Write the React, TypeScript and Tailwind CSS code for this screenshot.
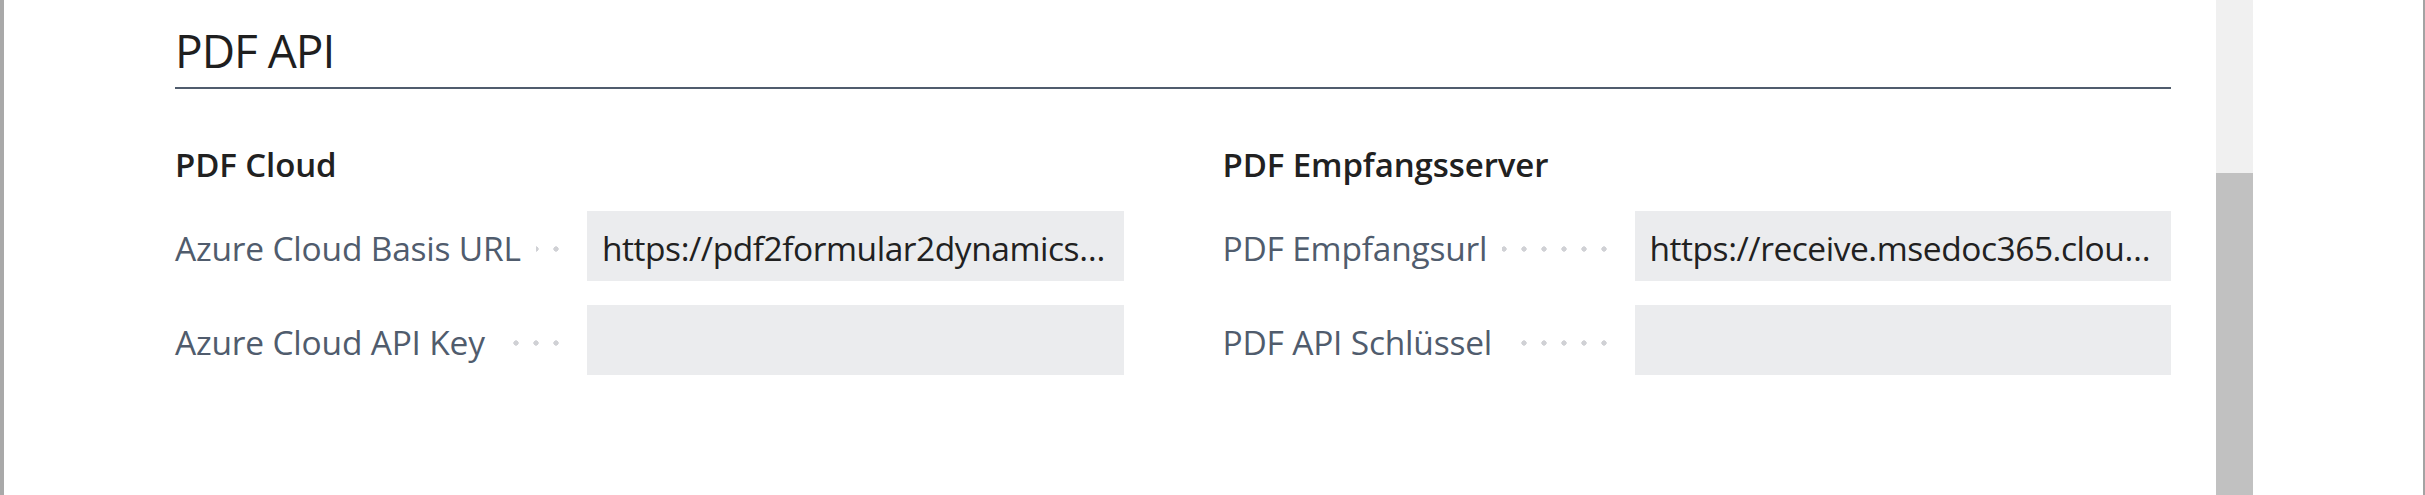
import React from "react";

const dots =
  "bg-[radial-gradient(circle,#d0d1d5_2.4px,transparent_2.9px)] bg-[length:20px_6px] bg-repeat-x bg-[position:right_top_35px]";

function Field({ label, value }: { label: string; value?: string }) {
  return (
    <div className="grid h-[70px] grid-cols-[391px_1fr] gap-x-[21px]">
      <div className={`flex h-[70px] items-center ${dots}`}>
        <span className="mt-[4px] bg-white pr-[15px] text-[33.5px] leading-[46px] tracking-[-0.2px] text-[#505c6d]">
          {label}
        </span>
      </div>
      <div className="flex h-[70px] min-w-0 items-center bg-[#ebecee] pl-[15px] pr-[15px]">
        <span className="mt-[4px] block truncate text-[33.5px] leading-[46px] tracking-[-0.45px] text-[#212121]">
          {value ?? ""}
        </span>
      </div>
    </div>
  );
}

function Group({
  title,
  rows,
}: {
  title: string;
  rows: { label: string; value?: string }[];
}) {
  return (
    <div className="min-w-0">
      <h3 className="h-[40px] text-[33px] font-semibold leading-[40px] tracking-[-0.1px] text-[#212121]">
        {title}
      </h3>
      <div className="mt-[26px] flex flex-col gap-[24px]">
        {rows.map((r) => (
          <Field key={r.label} label={r.label} value={r.value} />
        ))}
      </div>
    </div>
  );
}

export default function App() {
  return (
    <div
      className="flex h-[495px] w-full overflow-hidden border-l-4 border-r-2 border-l-[#a9a9a9] border-r-[#a3a3a3] bg-white"
      style={{ fontFamily: '"Open Sans", "Noto Sans", sans-serif' }}
    >
      <main className="min-w-0 flex-1 pl-[171px] pr-[45px]">
        <h2 className="mt-[20px] h-[60px] text-[46px] font-normal leading-[60px] tracking-[-1px] text-[#1f1f1f]">
          PDF API
        </h2>
        <div className="mt-[7px] h-[2px] bg-[#505c6d]" />
        <div className="mt-[56px] grid grid-cols-2 gap-x-[99px]">
          <Group
            title="PDF Cloud"
            rows={[
              {
                label: "Azure Cloud Basis URL",
                value: "https://pdf2formular2dynamics.azurewebsites.net/api/",
              },
              { label: "Azure Cloud API Key" },
            ]}
          />
          <Group
            title="PDF Empfangsserver"
            rows={[
              {
                label: "PDF Empfangsurl",
                value: "https://receive.msedoc365.cloud/api/receive",
              },
              { label: "PDF API Schlüssel" },
            ]}
          />
        </div>
      </main>
      <div className="flex w-[37px] shrink-0 flex-col bg-[#f0f0f0]">
        <div className="h-[173px] shrink-0" />
        <div className="flex-1 bg-[#c1c1c1]" />
      </div>
      <div className="w-[170px] shrink-0" />
    </div>
  );
}
